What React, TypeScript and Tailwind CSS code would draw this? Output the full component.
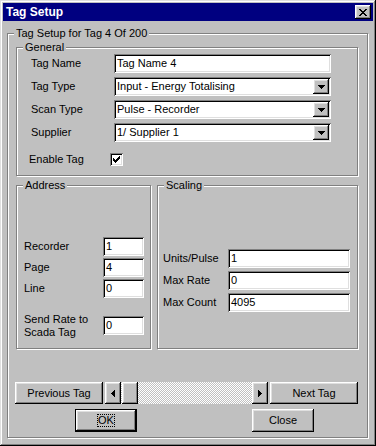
import React from "react";

const raised =
  "shadow-[inset_-1px_-1px_0_#000,inset_1px_1px_0_#fff,inset_-2px_-2px_0_#808080,inset_2px_2px_0_#dfdfdf]";
const sunken =
  "bg-white shadow-[inset_1px_1px_0_#808080,inset_-1px_-1px_0_#fff,inset_2px_2px_0_#000,inset_-2px_-2px_0_#dfdfdf]";
const etched = "border border-[#808080] shadow-[inset_1px_1px_0_#fff,1px_1px_0_#fff]";

const CLOSE_X = ["XX....XX", ".XX..XX.", "..XXXX..", "...XX...", "..XXXX..", ".XX..XX.", "XX....XX"];
const DOWN = ["XXXXXXX", ".XXXXX.", "..XXX..", "...X..."];
const LEFT = ["...X", "..XX", ".XXX", "XXXX", ".XXX", "..XX", "...X"];
const RIGHT = ["X...", "XX..", "XXX.", "XXXX", "XXX.", "XX..", "X..."];
const CHECK = ["......X", ".....XX", "X...XXX", "XX.XXX.", "XXXXX..", ".XXX...", "..X...."];

function Pix({ rows }: { rows: string[] }) {
  return (
    <svg width={rows[0].length} height={rows.length} shapeRendering="crispEdges" className="block">
      {rows.flatMap((r, y) =>
        [...r].map((c, x) =>
          c === "X" ? <rect key={`${x}-${y}`} x={x} y={y} width={1} height={1} fill="#000" /> : null
        )
      )}
    </svg>
  );
}

function Group({ label, className, children }: { label: string; className: string; children?: React.ReactNode }) {
  return (
    <div className={`relative ${etched} ${className}`}>
      <span className="absolute -top-[7px] left-[6px] px-[2px] bg-[#c0c0c0] leading-[13px]">{label}</span>
      {children}
    </div>
  );
}

function Edit({ value, className }: { value: string; className: string }) {
  return (
    <div className={`${sunken} flex items-center pl-[3px] ${className}`}>
      <span className="leading-[13px]">{value}</span>
    </div>
  );
}

function Combo({ value }: { value: string }) {
  return (
    <div className={`${sunken} flex items-center h-[19px] w-[217px] p-[2px]`}>
      <span className="flex-1 pl-[1px] leading-[13px]">{value}</span>
      <div className={`${raised} bg-[#c0c0c0] w-[16px] h-full flex items-center justify-center`}>
        <Pix rows={DOWN} />
      </div>
    </div>
  );
}

export default function App() {
  return (
    <div className="w-[376px] h-[446px] bg-[#c0c0c0] p-[3px] text-[11px] text-black font-[family-name:Liberation_Sans,Arial,sans-serif] shadow-[inset_-1px_-1px_0_#000,inset_1px_1px_0_#dfdfdf,inset_-2px_-2px_0_#808080,inset_2px_2px_0_#fff] overflow-hidden">
      {/* title bar */}
      <div className="h-[18px] bg-[#000080] flex items-center justify-between pl-[3px] pr-[2px]">
        <span className="text-white font-bold text-[12px] leading-[14px]">Tag Setup</span>
        <div className={`${raised} bg-[#c0c0c0] w-[16px] h-[14px] flex items-center justify-center`}>
          <Pix rows={CLOSE_X} />
        </div>
      </div>

      <Group label="Tag Setup for Tag 4 Of 200" className="ml-[4px] mt-[12px] w-[361px] h-[405px]">
        <div className="flex flex-col">
          {/* General */}
          <Group label="General" className="ml-[8px] mt-[13px] w-[342px] h-[129px]">
            <div className="flex flex-col gap-[4px] pt-[6px]">
              <div className="flex items-center">
                <span className="w-[97px] pl-[14px]">Tag Name</span>
                <Edit value="Tag Name 4" className="h-[19px] w-[217px]" />
              </div>
              <div className="flex items-center">
                <span className="w-[97px] pl-[14px]">Tag Type</span>
                <Combo value="Input - Energy Totalising" />
              </div>
              <div className="flex items-center">
                <span className="w-[97px] pl-[14px]">Scan Type</span>
                <Combo value="Pulse - Recorder" />
              </div>
              <div className="flex items-center">
                <span className="w-[97px] pl-[14px]">Supplier</span>
                <Combo value="1/ Supplier 1" />
              </div>
              <div className="flex items-center mt-[5px]">
                <span className="w-[93px] pl-[12px]">Enable Tag</span>
                <div className={`${sunken} w-[13px] h-[13px] flex items-center justify-center`}>
                  <Pix rows={CHECK} />
                </div>
              </div>
            </div>
          </Group>

          <div className="flex ml-[8px] mt-[9px]">
            {/* Address */}
            <Group label="Address" className="w-[135px] h-[164px]">
              <div className="flex flex-col gap-[2px] pt-[51px] pl-[7px]">
                {[
                  ["Recorder", "1"],
                  ["Page", "4"],
                  ["Line", "0"],
                ].map(([l, v]) => (
                  <div key={l} className="flex items-center">
                    <span className="w-[79px]">{l}</span>
                    <Edit value={v} className="h-[19px] w-[41px]" />
                  </div>
                ))}
                <div className="flex items-start mt-[13px]">
                  <span className="w-[79px] leading-[13px]">
                    Send Rate to
                    <br />
                    Scada Tag
                  </span>
                  <Edit value="0" className="mt-[3px] h-[19px] w-[41px]" />
                </div>
              </div>
            </Group>

            {/* Scaling */}
            <Group label="Scaling" className="ml-[6px] w-[201px] h-[164px]">
              <div className="flex flex-col gap-[3px] pt-[63px] pl-[5px]">
                {[
                  ["Units/Pulse", "1"],
                  ["Max Rate", "0"],
                  ["Max Count", "4095"],
                ].map(([l, v]) => (
                  <div key={l} className="flex items-center">
                    <span className="w-[65px]">{l}</span>
                    <Edit value={v} className="h-[19px] w-[122px]" />
                  </div>
                ))}
              </div>
            </Group>
          </div>

          {/* navigation */}
          <div className="flex ml-[7px] mt-[33px] h-[22px] gap-[2px]">
            <div className={`${raised} w-[88px] flex items-center justify-center`}>Previous Tag</div>
            <div className="w-[163px] flex bg-[image:repeating-conic-gradient(#fff_0_25%,#c0c0c0_0_50%)] bg-[length:2px_2px]">
              <div className={`${raised} bg-[#c0c0c0] w-[16px] flex items-center justify-center`}>
                <Pix rows={LEFT} />
              </div>
              <div className={`${raised} bg-[#c0c0c0] w-[16px] ml-[1px]`} />
              <div className="flex-1" />
              <div className={`${raised} bg-[#c0c0c0] w-[16px] flex items-center justify-center`}>
                <Pix rows={RIGHT} />
              </div>
            </div>
            <div className={`${raised} w-[88px] flex items-center justify-center`}>Next Tag</div>
          </div>

          <div className="flex ml-[67px] mt-[5px] h-[23px]">
            <div className="w-[62px] border border-black">
              <div className={`${raised} h-full flex items-center justify-center`}>
                <span className="border border-dotted border-black leading-[11px]">OK</span>
              </div>
            </div>
            <div className={`${raised} ml-[115px] w-[62px] flex items-center justify-center`}>Close</div>
          </div>
        </div>
      </Group>
    </div>
  );
}
